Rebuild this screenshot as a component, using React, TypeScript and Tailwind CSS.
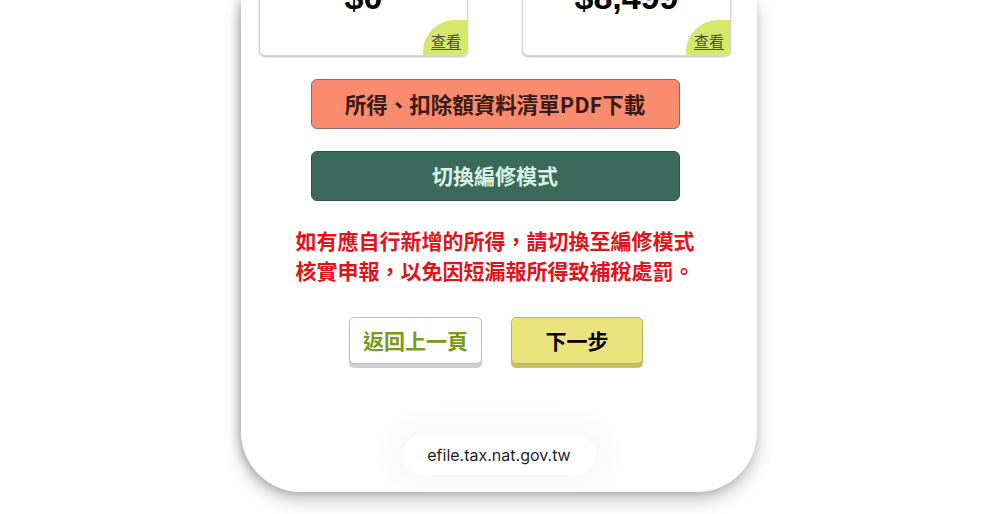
const cjk = { fontFamily: '"Noto Sans CJK TC", "Noto Sans", sans-serif' };

const cards = [
  { amount: "$0" },
  { amount: "$8,499" },
];

export default function App() {
  return (
    <div className="w-full h-[514px] bg-white overflow-hidden" style={cjk}>
      <div className="ml-[241px] w-[516px] h-[492px] bg-white rounded-b-[60px] shadow-[0_8px_18px_rgba(0,0,0,0.24),-3px_0_8px_rgba(0,0,0,0.2)] pl-[18px] pr-[26px] pb-[17px] flex flex-col overflow-hidden">
        {/* Summary cards */}
        <div className="flex justify-between -mt-[30px]">
          {cards.map((card, index) => (
            <div
              key={index}
              className="relative w-[209px] h-[86px] bg-white border border-[#d6d6d6] rounded-[6px] shadow-[0_1px_2px_rgba(0,0,0,0.25)]"
            >
              <div className="pt-[8px] text-center text-[34px] leading-[36px] font-bold text-black" style={{ fontFamily: '"Liberation Sans", Arial, sans-serif' }}>
                {card.amount}
              </div>
              <div className="absolute right-0 bottom-0 w-[44px] h-[35px] bg-[#d6e86c] rounded-tl-[32px] rounded-br-[5px] flex items-end justify-end pr-[6px] pb-[6px]">
                <span className="text-[15px] leading-[17px] text-[#4d4d3c] underline underline-offset-2">查看</span>
              </div>
            </div>
          ))}
        </div>

        {/* Action buttons */}
        <div className="flex flex-col items-center mt-[23px] gap-[22px]">
          <button className="w-[369px] h-[50px] bg-[#fa8b6e] border border-[#8c6b62] rounded-[6px] text-[21.5px] font-bold text-[#3b1a16]">
            所得、扣除額資料清單PDF下載
          </button>
          <button className="w-[369px] h-[50px] bg-[#3b6a5c] border border-[#2e5649] rounded-[6px] text-[21px] font-bold text-[#d9f2e3]">
            切換編修模式
          </button>
        </div>

        <p className="mt-[24px] text-center text-[21px] leading-[30px] font-bold text-[#e2141a]">
          如有應自行新增的所得，請切換至編修模式
          <br />
          核實申報，以免因短漏報所得致補稅處罰。
        </p>

        <div className="flex justify-center gap-[29px] mt-[32px] pl-[2px]">
          <button className="w-[133px] h-[47px] bg-white border border-[#bdbdbd] rounded-[5px] shadow-[0_4px_0_#cfcfcf] text-[21px] font-bold text-[#7a9a18]">
            返回上一頁
          </button>
          <button className="w-[132px] h-[47px] bg-[#ebe37c] border border-[#bdb45a] rounded-[5px] shadow-[0_4px_0_#c9c064] text-[21px] font-bold text-black">
            下一步
          </button>
        </div>

        {/* Address bar */}
        <div className="mt-auto flex justify-center pl-[8px]">
          <div className="w-[193px] h-[40px] rounded-full bg-white shadow-[0_0_28px_12px_rgba(0,0,0,0.035)] flex items-center justify-center text-[16px] text-[#1f1f1f]" style={{ fontFamily: 'Inter, "Liberation Sans", sans-serif' }}>
            efile.tax.nat.gov.tw
          </div>
        </div>
      </div>
    </div>
  );
}
